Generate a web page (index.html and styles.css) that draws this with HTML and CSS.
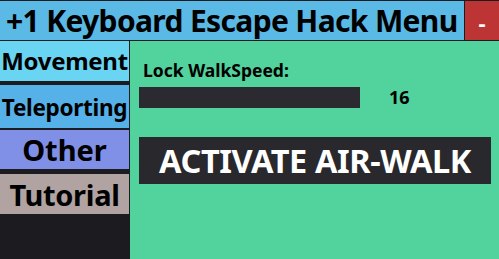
FILE: index.html
```html
<!DOCTYPE html>
<html lang="en">
<head>
    <meta charset="UTF-8">
    <title>+1 Keyboard Escape Hack Menu</title>
    <link rel="stylesheet" href="styles.css">
</head>
<body>
    <div class="menu">
        <div class="titlebar">
            <div class="title">+1 Keyboard Escape Hack Menu</div>
            <div class="close">-</div>
        </div>
        <div class="main">
            <div class="sidebar">
                <div class="tab tab-movement">Movement</div>
                <div class="tab tab-teleport">Teleporting</div>
                <div class="tab tab-other">Other</div>
                <div class="tab tab-tutorial">Tutorial</div>
            </div>
            <div class="content">
                <div class="label">Lock WalkSpeed:</div>
                <div class="speed-row">
                    <div class="speed-bar"></div>
                    <div class="speed-value">16</div>
                </div>
                <button class="activate">ACTIVATE AIR-WALK</button>
            </div>
        </div>
    </div>
</body>
</html>
```

FILE: styles.css
```css
body {
    margin: 0;
    width: 499px;
    height: 259px;
    overflow: hidden;
    background-color: #1b1b20;
    font-family: 'Noto Sans', sans-serif;
    font-weight: 700;
    color: #000;
}
.menu {
    display: flex;
    flex-direction: column;
    height: 259px;
}
.titlebar {
    display: flex;
    height: 39px;
    border-top: 1px solid #1b1b20;
    border-bottom: 1px solid #1b1b20;
}
.title {
    flex: 1;
    background-color: #5bb9e5;
    font-size: 30px;
    letter-spacing: -0.65px;
    line-height: 40px;
    padding-left: 6px;
    white-space: nowrap;
    overflow: hidden;
}
.close {
    width: 34px;
    margin-left: 1px;
    background-color: #bd3434;
    color: #fff;
    font-size: 22px;
    line-height: 42px;
    text-align: center;
}
.main {
    flex: 1;
    display: flex;
}
.sidebar {
    width: 129px;
    border-right: 1px solid #1b1b20;
    display: flex;
    flex-direction: column;
}
.tab {
    white-space: nowrap;
    overflow: hidden;
    text-align: center;
}
.tab-movement {
    height: 40px;
    background-color: #6ad5f2;
    font-size: 24px;
    letter-spacing: -0.3px;
    line-height: 40px;
}
.tab-teleport {
    height: 43px;
    margin-top: 4px;
    background-color: #55b1e8;
    font-size: 22.5px;
    letter-spacing: -0.3px;
    line-height: 45px;
}
.tab-other {
    height: 39px;
    margin-top: 2px;
    background-color: #8090e6;
    font-size: 29px;
    line-height: 40px;
}
.tab-tutorial {
    height: 40px;
    margin-top: 5px;
    background-color: #b1a3a2;
    font-size: 29px;
    letter-spacing: -0.3px;
    line-height: 42px;
}
.content {
    flex: 1;
    background-color: #52d29c;
    padding: 19px 8px 0 9px;
}
.label {
    font-size: 17.5px;
    line-height: 20px;
    padding-left: 4px;
}
.speed-row {
    display: flex;
    align-items: center;
    margin-top: 5px;
}
.speed-bar {
    width: 221px;
    height: 21px;
    background-color: #2a2a30;
}
.speed-value {
    margin-left: 29px;
    font-size: 18px;
}
.activate {
    display: block;
    margin-top: 28px;
    width: 352px;
    height: 47px;
    border: none;
    background-color: #28282d;
    color: #fff;
    font-family: 'Noto Sans', sans-serif;
    font-weight: 700;
    font-size: 32.5px;
    letter-spacing: -0.4px;
    padding: 0;
}
```
